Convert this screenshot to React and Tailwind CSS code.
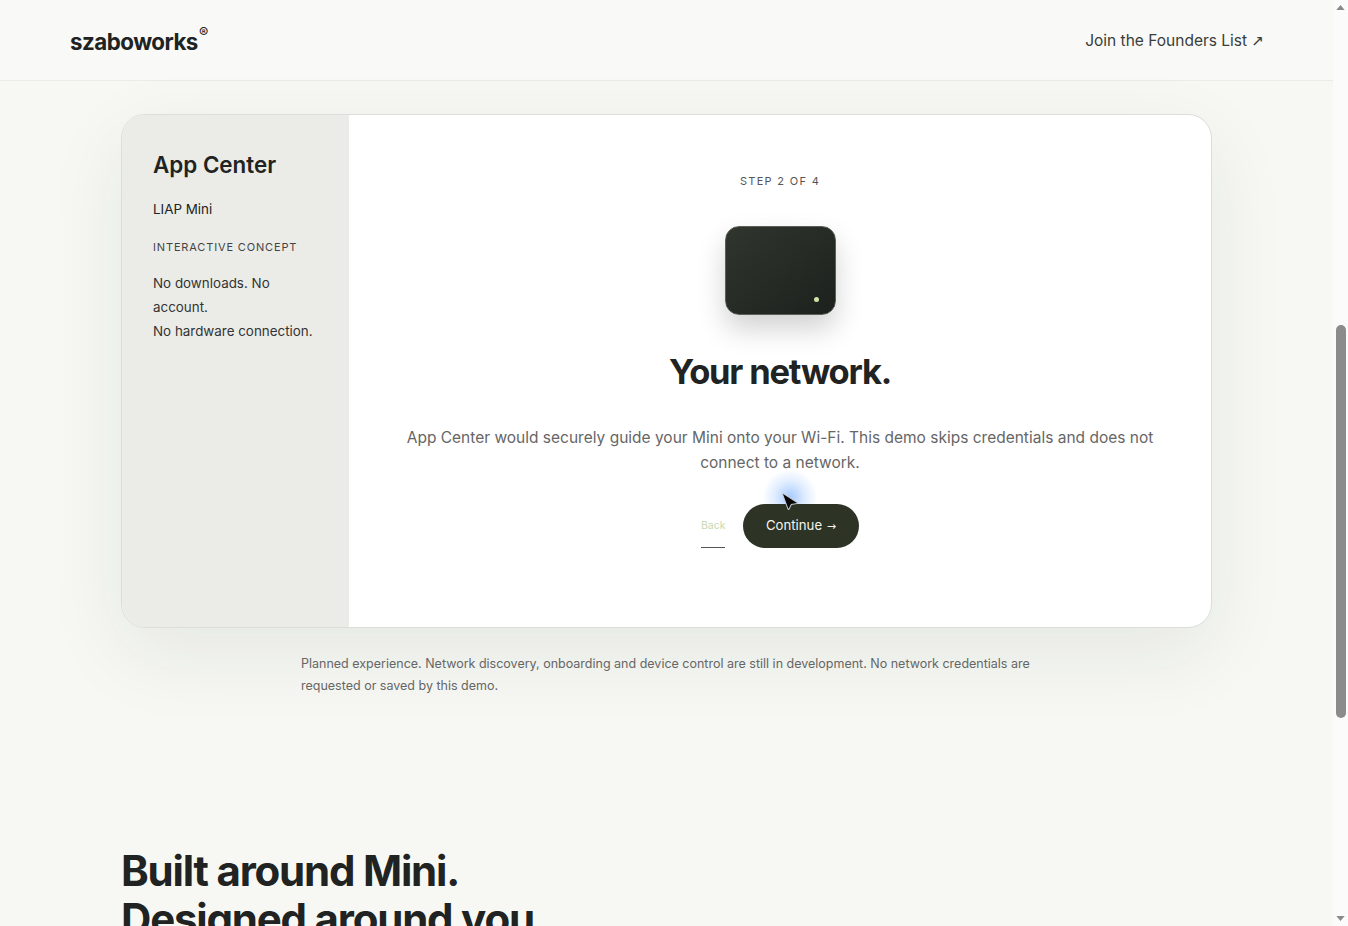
import React from "react";

const Cursor = () => (
  <svg viewBox="0 0 20 20" className="absolute left-[37px] top-[-12px] h-[20px] w-[20px]">
    <path d="M3 2 L17 11 L11 12 L8.5 17 Z" fill="#050505" stroke="#c5c9ce" strokeWidth="2" strokeLinejoin="round" paintOrder="stroke" />
  </svg>
);

const Scrollbar = () => (
  <div className="flex w-[15px] shrink-0 flex-col items-center bg-[#fbfbfb]">
    <svg viewBox="0 0 10 6" className="mt-[5px] h-[5px] w-[9px]"><path d="M5 0 L10 6 H0 Z" fill="#8a8a8a" /></svg>
    <div className="mt-[315px] h-[393px] w-[10px] rounded-full bg-[#8b8b8b]" />
    <svg viewBox="0 0 10 6" className="mt-auto mb-[5px] h-[5px] w-[9px]"><path d="M0 0 H10 L5 6 Z" fill="#8a8a8a" /></svg>
  </div>
);

export default function App() {
  return (
    <div className="flex h-[926px] w-[1348px] overflow-hidden bg-[#f7f8f4] font-['Inter',sans-serif] text-[#202321]">
      <div className="h-full w-[1333px] overflow-hidden">
        <header className="flex h-[81px] items-center justify-between border-b border-[#ebece8] bg-[#f9f9f7] pl-[70px] pr-[69px] pt-[3px]">
          <div className="relative text-[22.3px] font-bold tracking-[-0.5px]">
            szaboworks
            <span className="absolute -right-[10px] -top-[3px] text-[14px] font-medium">®</span>
          </div>
          <a className="-mt-[2px] text-[15.5px] text-[#3a3d3a]">
            Join the Founders List <span className="font-['DejaVu_Sans',sans-serif] text-[15px]">↗</span>
          </a>
        </header>

        <main className="px-[121px] pt-[33px]">
          <section className="flex h-[514px] w-[1091px] overflow-hidden rounded-[24px] border border-[#dcdeda] bg-white shadow-[0_26px_80px_rgba(30,35,25,0.08)]">
            <aside className="w-[227px] shrink-0 bg-[#ebece8] pl-[31px] pr-[30px] pt-[33px]">
              <h2 className="text-[22.4px] font-semibold">App Center</h2>
              <p className="mt-[17px] text-[13.4px]">LIAP Mini</p>
              <p className="mt-[20px] text-[11px] tracking-[0.85px] text-[#444]">INTERACTIVE CONCEPT</p>
              <p className="mt-[16px] text-[13.4px] leading-[24px] text-[#333]">
                No downloads. No account.
                <br />
                No hardware connection.
              </p>
            </aside>
            <div className="flex flex-1 flex-col items-center pt-[58px]">
              <p className="text-[11px] tracking-[1.3px] text-[#555]">STEP 2 OF 4</p>
              <div className="relative mt-[36px] h-[89px] w-[111px] rounded-[14px] border border-[#5c5f58] bg-gradient-to-br from-[#30362e] to-[#1c211d] shadow-[0_14px_28px_rgba(0,0,0,0.18)]">
                <span className="absolute bottom-[12px] right-[16px] h-[5px] w-[5px] rounded-full bg-[#cfe3a8]" />
              </div>
              <h1 className="mt-[31px] text-[34.5px] font-bold tracking-[-1.2px]">Your network.</h1>
              <p className="mt-[28px] w-[760px] text-center text-[15.5px] leading-[25px] text-[#666]">
                App Center would securely guide your Mini onto your Wi-Fi. This demo skips credentials and does not connect to a network.
              </p>
              <div className="mt-[29px] flex items-center gap-[18px]">
                <button className="h-[44px] w-[24px] border-b border-[#555] text-[10.5px] text-[#c8d8b0]">Back</button>
                <div className="relative">
                  <div className="absolute left-[19px] top-[-35px] h-[56px] w-[56px] rounded-full bg-[radial-gradient(circle,rgba(60,140,255,0.45)_0%,rgba(90,160,255,0.18)_40%,rgba(120,180,255,0)_70%)]" />
                  <button className="relative h-[44px] w-[116px] rounded-full bg-[#2d3325] text-[13.2px] text-[#f4f5ef]">
                    Continue <span className="ml-[1px] font-['DejaVu_Sans',sans-serif] text-[11px]">→</span>
                  </button>
                  <Cursor />
                </div>
              </div>
            </div>
          </section>
          <p className="ml-[180px] mt-[25px] w-[760px] text-[12.5px] leading-[22px] text-[#666]">
            Planned experience. Network discovery, onboarding and device control are still in development. No network credentials are requested or saved by this demo.
          </p>
          <h2 className="mt-[150px] text-[42px] font-bold leading-[48px] tracking-[-1.2px]">
            Built around Mini.
            <br />
            Designed around you.
          </h2>
        </main>
      </div>
      <Scrollbar />
    </div>
  );
}
